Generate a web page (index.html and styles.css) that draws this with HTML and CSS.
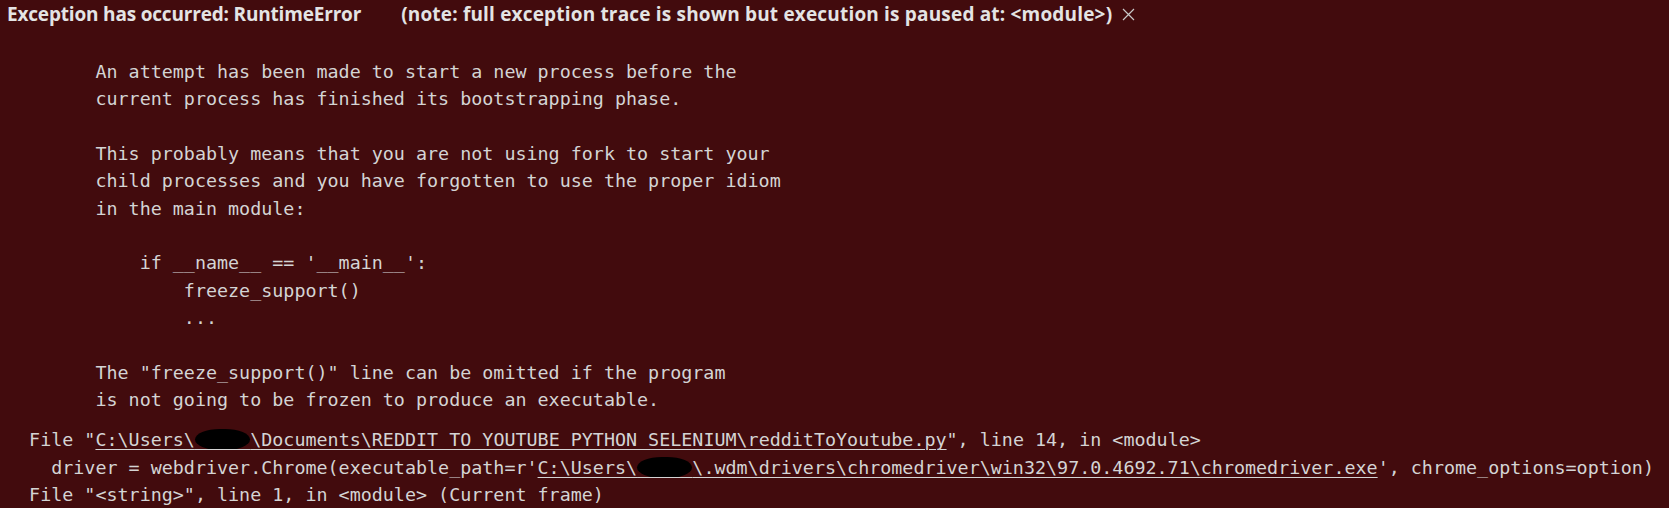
FILE: index.html
```html
<!DOCTYPE html>
<html lang="en">
<head>
<meta charset="utf-8">
<title>Exception has occurred</title>
<link rel="stylesheet" href="styles.css">
</head>
<body>
<div class="exception-widget">
  <div class="title">
    <span class="label">Exception has occurred: RuntimeError</span>
    <span class="description">(note: full exception trace is shown but execution is paused at: &lt;module&gt;)</span>
    <span class="close" title="Close"><svg width="13" height="13" viewBox="0 0 13 13"><path d="M1 1 L12 12 M12 1 L1 12" stroke="#c8c8c8" stroke-width="1.2" fill="none"/></svg></span>
  </div>
<pre class="message">        An attempt has been made to start a new process before the
        current process has finished its bootstrapping phase.

        This probably means that you are not using fork to start your
        child processes and you have forgotten to use the proper idiom
        in the main module:

            if __name__ == '__main__':
                freeze_support()
                ...

        The "freeze_support()" line can be omitted if the program
        is not going to be frozen to produce an executable.</pre>
<pre class="stack">  File "<span class="link">C:\Users\<span class="redact">     </span>\Documents\REDDIT TO YOUTUBE PYTHON SELENIUM\redditToYoutube.py</span>", line 14, in &lt;module&gt;
    driver = webdriver.Chrome(executable_path=r'<span class="link">C:\Users\<span class="redact">     </span>\.wdm\drivers\chromedriver\win32\97.0.4692.71\chromedriver.exe</span>', chrome_options=option)
  File "&lt;string&gt;", line 1, in &lt;module&gt; (Current frame)</pre>
</div>
</body>
</html>
```
FILE: styles.css
```css
html, body {
  margin: 0;
  background: #420b0d;
}

.exception-widget {
  padding-left: 7px;
  color: #d4d4d4;
}

.title {
  display: flex;
  align-items: center;
  height: 28px;
  line-height: 28px;
  font-family: "Open Sans", "Noto Sans", sans-serif;
  font-weight: 700;
  font-size: 19px;
  color: #e4e4e4;
  white-space: nowrap;
}

.label {
  letter-spacing: -0.18px;
}

.description {
  margin-left: 40px;
  letter-spacing: 0.18px;
}

.close {
  display: flex;
  margin-left: 10px;
}

pre {
  margin: 0;
  font-family: "DejaVu Sans Mono", "Liberation Mono", monospace;
  font-size: 18.37px;
}

.message {
  margin-top: 30px;
  line-height: 27.33px;
}

.stack {
  margin-top: 13px;
  line-height: 27.5px;
}

.link {
  text-decoration: underline;
  text-underline-offset: 3px;
  text-decoration-thickness: 1px;
}

.redact {
  background: #000;
  border-radius: 45% / 50%;
}
```
